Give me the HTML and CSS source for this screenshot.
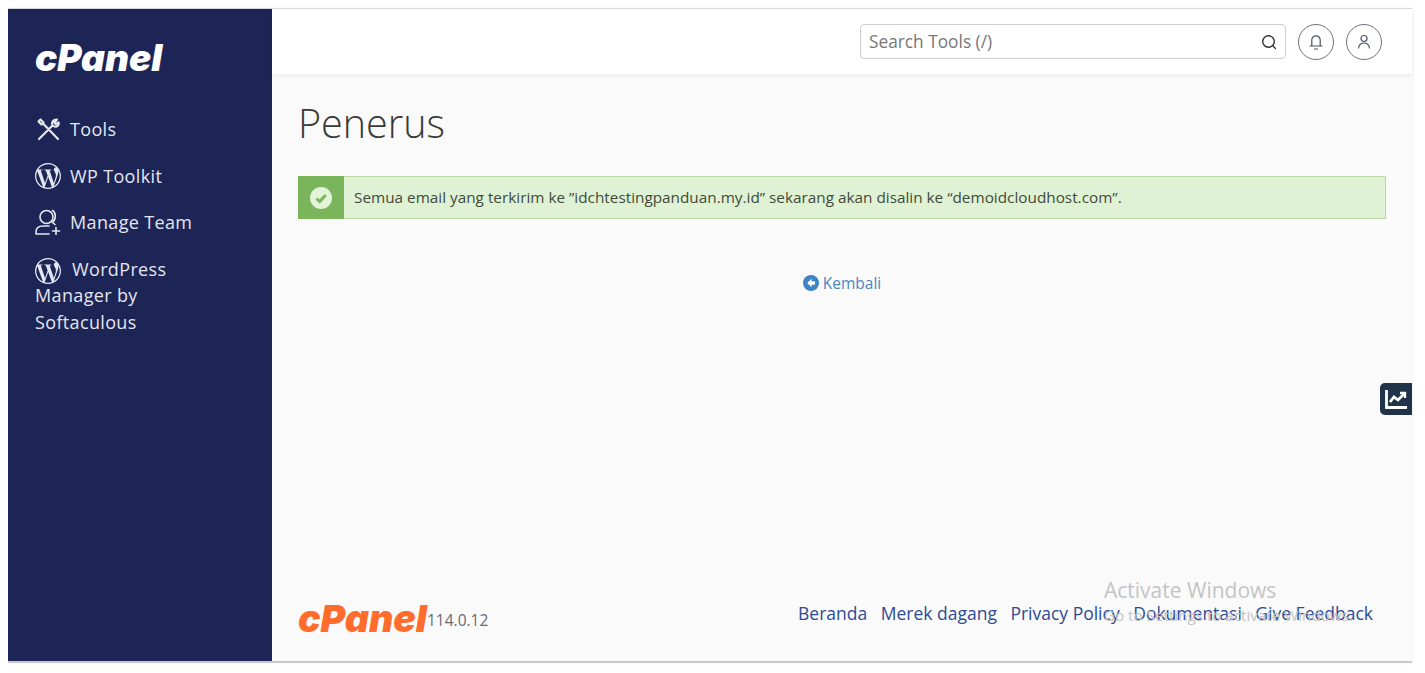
FILE: index.html
```html
<!DOCTYPE html>
<html lang="id">
<head>
<meta charset="utf-8">
<title>Penerus - cPanel</title>
<link rel="stylesheet" href="styles.css">
</head>
<body>
<svg class="defs" aria-hidden="true"><defs>
<symbol id="wp" viewBox="0 0 24 24"><path d="M21.469 6.825c.84 1.537 1.318 3.3 1.318 5.175 0 3.979-2.156 7.456-5.363 9.325l3.295-9.527c.615-1.54.82-2.771.82-3.864 0-.405-.026-.78-.07-1.11m-7.981.105c.647-.03 1.232-.105 1.232-.105.582-.075.514-.93-.067-.899 0 0-1.755.135-2.88.135-1.064 0-2.85-.15-2.85-.15-.585-.03-.661.855-.075.885 0 0 .54.061 1.125.09l1.68 4.605-2.37 7.08L5.354 6.9c.649-.03 1.234-.1 1.234-.1.585-.075.516-.93-.065-.896 0 0-1.746.138-2.874.138-.2 0-.438-.008-.69-.015C4.911 3.15 8.235 1.215 12 1.215c2.809 0 5.365 1.072 7.286 2.833-.046-.003-.091-.009-.141-.009-1.06 0-1.812.923-1.812 1.914 0 .89.513 1.643 1.06 2.531.411.72.89 1.643.89 2.977 0 .915-.354 1.994-.821 3.479l-1.075 3.585-3.9-11.61.001.014zM12 22.784c-1.059 0-2.081-.153-3.048-.437l3.237-9.406 3.315 9.087c.024.053.05.101.078.149-1.12.393-2.325.609-3.582.609M1.211 12c0-1.564.336-3.05.935-4.39L7.29 21.709C3.694 19.96 1.212 16.271 1.211 12M12 0C5.385 0 0 5.385 0 12s5.385 12 12 12 12-5.385 12-12S18.615 0 12 0"/></symbol>
</defs></svg>
<div class="frame">
  <aside class="sidebar">
    <div class="logo logo-white">cPanel</div>
    <nav class="menu">
      <a class="item"><svg class="ico" viewBox="0 0 26 26" fill="none" stroke="currentColor" stroke-width="2.200" stroke-linecap="round" stroke-linejoin="round"><path d="M4 23 17.500 9.500M17.500 9.500c-1.500-3 .5-6 4.500-6l-2.500 3 1.200 1.500 3-1.500c.3 3.500-3 5.500-6.200 3zM5.500 3.500 3.500 5.500l3 3 2-2zM8 7.500l15 15.500"/></svg><span>Tools</span></a>
      <a class="item"><svg class="ico" fill="currentColor"><use href="#wp"/></svg><span>WP Toolkit</span></a>
      <a class="item"><svg class="ico" viewBox="0 0 26 26" fill="none" stroke="currentColor" stroke-width="1.600" stroke-linecap="round"><circle cx="11.500" cy="8" r="6.500"/><path d="M17.500 1.500c3.500 2 4 8.500 0 12l2.500 2M1 25v-2c0-4 3-6 7-6h6M1 25h13M21 18.500v7M17.500 22h7"/></svg><span>Manage Team</span></a>
      <a class="item item-wrap"><svg class="ico ico-inline" fill="currentColor"><use href="#wp"/></svg><span class="wrap-first">WordPress</span> Manager by Softaculous</a>
    </nav>
  </aside>
  <div class="content">
    <header class="topbar">
      <div class="search"><span>Search Tools (/)</span>
        <svg class="search-ico" viewBox="0 0 16 16" fill="none" stroke="#333" stroke-width="1.400" stroke-linecap="round"><circle cx="7.500" cy="7.500" r="5.800"/><path d="m11.500 11.500 3 3"/></svg>
      </div>
      <button class="round"><svg viewBox="0 0 16 16" fill="none" stroke="#4a4f63" stroke-width="1.200" stroke-linecap="round"><path d="M3.800 12V6a4.200 4.200 0 0 1 8.400 0v6M2 12h12M6.500 15h3"/></svg></button>
      <button class="round"><svg viewBox="0 0 16 16" fill="none" stroke="#4a4f63" stroke-width="1.200" stroke-linecap="round"><circle cx="8" cy="4.500" r="3"/><path d="M2.500 14c.5-2.800 2-5 5.500-5s5 2.200 5.500 5"/></svg></button>
    </header>
    <main class="main">
      <h1 class="title">Penerus</h1>
      <div class="alert">
        <div class="alert-ico"><svg viewBox="0 0 22 22"><circle cx="11" cy="11" r="11" fill="#e2f3d8"/><path d="m6.500 11.500 3.200 3 6-6.500" fill="none" stroke="#7ab55c" stroke-width="3"/></svg></div>
        <div class="alert-text">Semua email yang terkirim ke ”idchtestingpanduan.my.id” sekarang akan disalin ke “demoidcloudhost.com”.</div>
      </div>
      <a class="back"><svg viewBox="0 0 16 16"><circle cx="8" cy="8" r="8" fill="#3d85c6"/><path d="M8.500 3.800 4.300 8l4.200 4.200V9.800H12V6.200H8.500z" fill="#fff"/></svg>Kembali</a>
      <footer class="footer">
        <div class="brand"><div class="logo logo-orange">cPanel</div><span class="version">114.0.12</span></div>
        <nav class="links"><a>Beranda</a><a>Merek dagang</a><a>Privacy Policy</a><a>Dokumentasi</a><a>Give Feedback</a></nav>
      </footer>
    </main>
    <div class="activate"><div class="a1">Activate Windows</div><div class="a2">Go to Settings to activate Windows.</div></div>
    <button class="float"><svg viewBox="0 0 24 24" fill="none" stroke="#fff" stroke-width="2.800"><path d="M2.500 3v17.500H23"/><path d="m6 15 4-5 4 3 6-6"/><path d="M16 6h5v5" stroke-width="2.400"/></svg></button>
  </div>
</div>
</body>
</html>
```

FILE: styles.css
```css
* { box-sizing: border-box; }
html, body { margin: 0; background: #fff; }
body { font-family: "Open Sans", "Liberation Sans", sans-serif; padding: 8px 13px 0 8px; height: 673px; overflow: hidden; }
.defs { width: 0; height: 0; position: absolute; }
.frame { display: flex; width: 1404px; height: 655px; border-top: 1px solid #d5d8de; border-bottom: 2px solid #c9c9c9; box-shadow: 1px 0 3px rgba(0,0,0,.05); }
.sidebar { width: 264px; flex: none; background: #1d2556; color: #e4e6ef; padding: 30px 27px 0; }
.logo { font-family: "Inter", "Liberation Sans", sans-serif; font-weight: 900; font-style: italic; letter-spacing: 0; line-height: 1; }
.logo-white { color: #fff; font-size: 37px; height: 38px; }
.menu { margin-top: 39px; font-size: 18px; line-height: 26.500px; letter-spacing: .35px; }
.item { display: flex; align-items: center; gap: 9px; margin-bottom: 20px; }
.item-wrap { display: block; padding-right: 60px; }
.ico { width: 26px; height: 26px; flex: none; }
.ico-inline { vertical-align: middle; margin: -3px 0; }
.wrap-first { margin-left: 11px; }
.content { flex: 1; display: flex; flex-direction: column; position: relative; min-width: 0; }
.topbar { height: 65px; flex: none; background: #fff; display: flex; align-items: center; justify-content: flex-end; padding: 0 30px 0 0; box-shadow: 0 2px 4px rgba(0,0,0,.06); z-index: 1; }
.search { width: 426px; height: 35px; border: 1px solid #cfcfcf; border-radius: 4px; display: flex; align-items: center; justify-content: space-between; padding: 0 8px 0 8px; font-size: 17.300px; color: #777; margin-right: 12px; }
.search-ico { width: 16px; height: 16px; }
.round { width: 36px; height: 36px; border: 1px solid #6d7080; border-radius: 50%; background: #fff; padding: 9px; margin-left: 12px; display: flex; }
.round:first-of-type { margin-left: 0; }
.round svg { width: 16px; height: 16px; flex: none; }
.main { flex: 1; background: #fafafa; padding: 0 26px 0; display: flex; flex-direction: column; }
.title { font-weight: 300; font-size: 39.500px; line-height: 54px; margin: 22px 0 26px; color: #3a3a3a; }
.alert { display: flex; height: 43px; background: #dff2d3; border: 1px solid #b9d8a6; }
.alert-ico { width: 46px; margin: -1px 0 -1px -1px; background: #7ab55c; display: flex; align-items: center; justify-content: center; flex: none; }
.alert-ico svg { width: 22px; height: 22px; }
.alert-text { font-size: 15.320px; line-height: 40px; padding-left: 10px; color: #3f4a3c; }
.back { align-self: center; margin-top: 53px; font-size: 15.500px; line-height: 22px; color: #4a86c5; display: flex; align-items: center; gap: 4px; }
.back svg { width: 16px; height: 16px; }
.footer { margin-top: auto; display: flex; justify-content: space-between; align-items: flex-start; height: 60px; }
.brand { display: flex; align-items: flex-end; }
.logo-orange { color: #ff6c2c; font-size: 37.500px; height: 34px; line-height: 35px; }
.version { font-size: 15.500px; color: #666b72; line-height: 22px; margin: 0 0 4px 0; }
.links { display: flex; gap: 13.500px; font-size: 17.500px; line-height: 24px; color: #2d4a94; padding-right: 13px; }
.activate { position: absolute; left: 832px; top: 568px; color: #c4c4c4; pointer-events: none; }
.a1 { font-size: 21px; line-height: 27px; }
.a2 { font-size: 15.200px; line-height: 22px; }
.float { position: absolute; right: 0; top: 374px; width: 32px; height: 32px; padding: 4px; border: 0; background: #1f3349; border-radius: 5px 0 0 5px; }
.float svg { width: 24px; height: 24px; display: block; }
```
